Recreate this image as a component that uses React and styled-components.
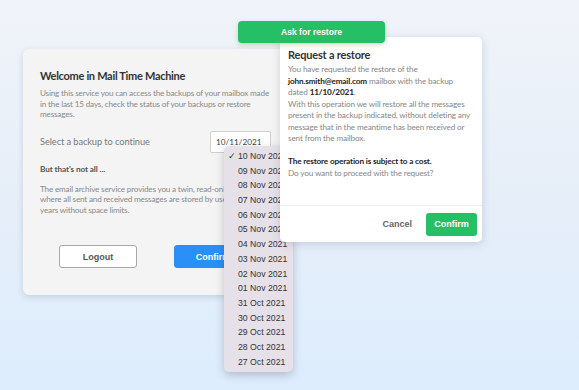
import styled, { createGlobalStyle } from "styled-components";

const GlobalStyle = createGlobalStyle`
  html, body {
    margin: 0;
    padding: 0;
  }
  * {
    box-sizing: border-box;
  }
`;

const Page = styled.div`
  position: relative;
  width: 579px;
  height: 390px;
  overflow: hidden;
  padding: 49px 0 0 23px;
  background: linear-gradient(180deg, #f0f4f9 0%, #e6eef8 50%, #ddedfd 100%);
  font-family: "Lato", "Noto Sans", sans-serif;
`;

const WelcomeCard = styled.div`
  width: 265px;
  height: 246px;
  padding: 20px 17px 0;
  background: #f4f4f4;
  border-radius: 6px;
  box-shadow: 0 2px 6px rgba(60, 80, 110, 0.18);
  display: flex;
  flex-direction: column;
`;

const CardTitle = styled.h2`
  margin: 0;
  font-size: 11px;
  line-height: 14px;
  font-weight: 700;
  color: #333;
  letter-spacing: -0.3px;
`;

const Desc = styled.p`
  margin: ${(p) => p.$top || 0}px 0 0;
  font-size: 8.2px;
  line-height: 10.5px;
  color: #8a8a8a;
  letter-spacing: -0.2px;
`;

const Line = styled.span`
  display: block;
  white-space: nowrap;
`;

const SelectRow = styled.div`
  margin-top: 11px;
  display: flex;
  align-items: center;
  justify-content: space-between;
`;

const SelectLabel = styled.span`
  font-size: 9.3px;
  color: #7a7a7a;
  letter-spacing: -0.1px;
`;

const SelectBox = styled.div`
  width: 61px;
  height: 22px;
  border: 1px solid #cfcfcf;
  background: #fff;
  border-radius: 2px;
  display: flex;
  align-items: center;
  justify-content: space-between;
  padding: 0 6px 0 5px;
  font-size: 8.2px;
  color: #444;
`;

const Note = styled.div`
  margin-top: 11px;
  font-size: 8.2px;
  line-height: 10px;
  font-weight: 700;
  color: #555;
  letter-spacing: -0.1px;
`;

const ButtonRow = styled.div`
  margin-top: 30px;
  display: flex;
  justify-content: center;
  gap: 37px;
`;

const CardButton = styled.button`
  width: 78px;
  height: 23px;
  border-radius: 3px;
  font-family: "Liberation Sans", Arial, sans-serif;
  font-size: 9px;
  font-weight: 700;
  cursor: pointer;
  border: 1px solid ${(p) => (p.$primary ? "#2a90f7" : "#a8a8a8")};
  background: ${(p) => (p.$primary ? "#2a90f7" : "#fff")};
  color: ${(p) => (p.$primary ? "#fff" : "#555")};
`;

const Dropdown = styled.ul`
  position: absolute;
  left: 224px;
  top: 146px;
  width: 69px;
  margin: 0;
  padding: 3px 0;
  list-style: none;
  background: #e6e0e9;
  border-radius: 5px;
  box-shadow: 0 3px 8px rgba(40, 40, 70, 0.25);
  font-family: "Liberation Sans", Arial, sans-serif;
  font-size: 8.7px;
  color: #333;
`;

const DropItem = styled.li`
  height: 14.7px;
  line-height: 14.7px;
  padding-left: 14px;
  position: relative;
  white-space: nowrap;
`;

const Check = styled.span`
  position: absolute;
  left: 4px;
  font-size: 8.5px;
`;

const RestorePanel = styled.div`
  position: absolute;
  left: 280px;
  top: 37px;
  width: 202px;
  height: 205px;
  background: #fff;
  border-radius: 5px;
  box-shadow: 0 2px 8px rgba(60, 80, 110, 0.2);
  display: flex;
  flex-direction: column;
`;

const PanelBody = styled.div`
  flex: 1;
  padding: 11px 8px 0;
  border-bottom: 1px solid #ececec;
`;

const PanelTitle = styled.h3`
  margin: 0;
  font-size: 11px;
  line-height: 14px;
  font-weight: 700;
  color: #333;
  letter-spacing: -0.2px;
`;

const PanelText = styled.p`
  margin: ${(p) => p.$top || 0}px 0 0;
  font-size: 8.2px;
  line-height: 11.5px;
  color: #888;
  letter-spacing: -0.15px;

  b {
    color: #222;
    font-weight: 700;
  }
`;

const PanelFooter = styled.div`
  height: 36px;
  display: flex;
  align-items: center;
  justify-content: flex-end;
  gap: 14px;
  padding-right: 5px;
`;

const TextButton = styled.button`
  border: none;
  background: none;
  padding: 0;
  font-family: "Liberation Sans", Arial, sans-serif;
  font-size: 9px;
  font-weight: 700;
  color: #666;
`;

const GreenButton = styled.button`
  width: 51px;
  height: 23px;
  border: none;
  border-radius: 3px;
  background: #25c065;
  color: #fff;
  font-family: "Liberation Sans", Arial, sans-serif;
  font-size: 9px;
  font-weight: 700;
`;

const AskButton = styled.div`
  position: absolute;
  left: 238px;
  top: 21px;
  width: 147px;
  height: 22px;
  border-radius: 4px;
  background: #25c065;
  box-shadow: 0 2px 5px rgba(30, 80, 50, 0.2);
  color: #fff;
  display: flex;
  align-items: center;
  justify-content: center;
  font-family: "Liberation Sans", Arial, sans-serif;
  font-size: 8.6px;
  font-weight: 700;
`;

const Chevron = () => (
  <svg width="9" height="6" viewBox="0 0 9 6" fill="none">
    <path d="M1 1l3.5 3.5L8 1" stroke="#999" strokeWidth="0.9" />
  </svg>
);

const dates = [
  "10 Nov 2021",
  "09 Nov 2021",
  "08 Nov 2021",
  "07 Nov 2021",
  "06 Nov 2021",
  "05 Nov 2021",
  "04 Nov 2021",
  "03 Nov 2021",
  "02 Nov 2021",
  "01 Nov 2021",
  "31 Oct 2021",
  "30 Oct 2021",
  "29 Oct 2021",
  "28 Oct 2021",
  "27 Oct 2021",
];

const App = () => {
  return (
    <>
      <GlobalStyle />
      <Page>
        <WelcomeCard>
          <CardTitle>Welcome in Mail Time Machine</CardTitle>
          <Desc $top={5}>
            <Line>
              Using this service you can access the backups of your mailbox made
            </Line>
            <Line>
              in the last 15 days, check the status of your backups or restore
            </Line>
            <Line>messages.</Line>
          </Desc>
          <SelectRow>
            <SelectLabel>Select a backup to continue</SelectLabel>
            <SelectBox>
              10/11/2021
              <Chevron />
            </SelectBox>
          </SelectRow>
          <Note>But that's not all ...</Note>
          <Desc $top={10}>
            <Line>
              The email archive service provides you a twin, read-only mailbox
            </Line>
            <Line>
              where all sent and received messages are stored by user for 10
            </Line>
            <Line>years without space limits.</Line>
          </Desc>
          <ButtonRow>
            <CardButton>Logout</CardButton>
            <CardButton $primary>Confirm</CardButton>
          </ButtonRow>
        </WelcomeCard>

        <Dropdown>
          {dates.map((d, i) => (
            <DropItem key={d}>
              {i === 0 && <Check>✓</Check>}
              {d}
            </DropItem>
          ))}
        </Dropdown>

        <RestorePanel>
          <PanelBody>
            <PanelTitle>Request a restore</PanelTitle>
            <PanelText $top={2}>
              <Line>You have requested the restore of the</Line>
              <Line>
                <b>john.smith@email.com</b> mailbox with the backup
              </Line>
              <Line>
                dated <b>11/10/2021</b>.
              </Line>
              <Line>With this operation we will restore all the messages</Line>
              <Line>present in the backup indicated, without deleting any</Line>
              <Line>message that in the meantime has been received or</Line>
              <Line>sent from the mailbox.</Line>
            </PanelText>
            <PanelText $top={11.5}>
              <Line>
                <b>The restore operation is subject to a cost.</b>
              </Line>
              <Line>Do you want to proceed with the request?</Line>
            </PanelText>
          </PanelBody>
          <PanelFooter>
            <TextButton>Cancel</TextButton>
            <GreenButton>Confirm</GreenButton>
          </PanelFooter>
        </RestorePanel>

        <AskButton>Ask for restore</AskButton>
      </Page>
    </>
  );
};

export default App;
